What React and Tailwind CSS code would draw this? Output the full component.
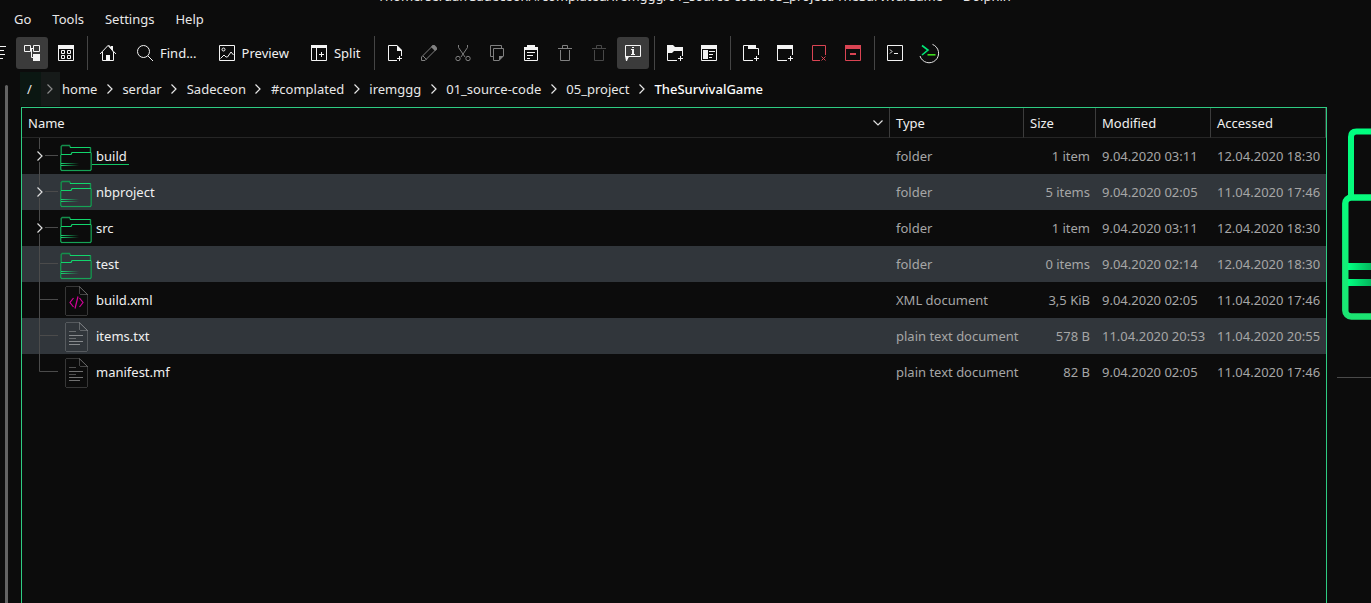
import React from "react";

const menus = ["Go", "Tools", "Settings", "Help"];

const crumbs = ["home", "serdar", "Sadeceon", "#complated", "iremggg", "01_source-code", "05_project", "TheSurvivalGame"];

const files = [
  { name: "build", kind: "folder", expandable: true, type: "folder", size: "1 item", modified: "9.04.2020 03:11", accessed: "12.04.2020 18:30", current: true },
  { name: "nbproject", kind: "folder", expandable: true, type: "folder", size: "5 items", modified: "9.04.2020 02:05", accessed: "11.04.2020 17:46" },
  { name: "src", kind: "folder", expandable: true, type: "folder", size: "1 item", modified: "9.04.2020 03:11", accessed: "12.04.2020 18:30" },
  { name: "test", kind: "folder", type: "folder", size: "0 items", modified: "9.04.2020 02:14", accessed: "12.04.2020 18:30" },
  { name: "build.xml", kind: "xml", type: "XML document", size: "3,5 KiB", modified: "9.04.2020 02:05", accessed: "11.04.2020 17:46" },
  { name: "items.txt", kind: "text", type: "plain text document", size: "578 B", modified: "11.04.2020 20:53", accessed: "11.04.2020 20:55" },
  { name: "manifest.mf", kind: "text", type: "plain text document", size: "82 B", modified: "9.04.2020 02:05", accessed: "11.04.2020 17:46" },
];

const line = { fill: "none", stroke: "currentColor" };

const glyphs = {
  compact: (
    <g fill="currentColor">
      <path d="M3 4h16v1H3zM3 8h14v1H3zM3 12h15v1H3zM3 16h13v1H3z" />
    </g>
  ),
  tree: (
    <g>
      <path {...line} d="M3.5 3.5h6v6h-6zM12.5 3.5h6v6h-6zM10 6.5h2M10.5 7v8.5h2" />
      <path fill="currentColor" d="M12 12h7v7h-7z" />
    </g>
  ),
  grid: (
    <g>
      <path {...line} d="M3.5 3.5h15v15h-15zM6.5 8.5h3v3h-3zM12.5 8.5h3v3h-3zM6.5 13.5h3v3h-3zM12.5 13.5h3v3h-3z" />
      <path fill="currentColor" d="M3 3h16v4H3z" />
    </g>
  ),
  home: (
    <g>
      <path {...line} d="M3 12l8-8.5 8 8.500M5.500 10v8.500h11V10" />
      <path fill="currentColor" d="M9 13h4v6H9zM11 3h1l2 2V4h2v6z" />
    </g>
  ),
  find: (
    <g {...line}>
      <circle cx="9.500" cy="9.500" r="6" />
      <path d="M14 14l5 5" />
    </g>
  ),
  preview: (
    <g {...line}>
      <path d="M3.500 3.500h15v15h-15zM4.500 16.500l3.500-3.500 2 2h1.500l3.500-5 2.500 3" />
      <circle cx="7.500" cy="7.500" r="1.500" />
    </g>
  ),
  split: (
    <g>
      <path {...line} d="M3.500 3.500h15v15h-15zM8.500 6v12M13.500 10v5M11 12.500h5" />
      <path fill="currentColor" d="M3 3h16v3H3z" />
    </g>
  ),
  newFile: (
    <g>
      <path {...line} d="M13 3.500H4.500v15H13M17.500 8v6M15.500 14v5M13 16.500h5" />
      <path fill="currentColor" d="M13 3l5 5v1h-5z" />
    </g>
  ),
  pencil: (
    <g>
      <path {...line} d="M3.500 18.500v-3.500L14.500 4l3.500 3.500L7 18.500zM5 14l3.500 3.500" />
      <path fill="currentColor" d="M13 5l1.500-2h2L19 5.500v2L17 9z" />
    </g>
  ),
  cut: (
    <g {...line}>
      <path d="M6.500 3v2.500L13 15M15.500 3v2.500L9 15" />
      <circle cx="6" cy="16.500" r="2.200" />
      <circle cx="16" cy="16.500" r="2.200" />
    </g>
  ),
  copy: (
    <g>
      <path {...line} d="M7 14.500H4.500v-11h11V6M13 18.500H7.500v-12h10V14" />
      <path fill="currentColor" d="M13 14h5l-5 5z" />
    </g>
  ),
  paste: (
    <g>
      <path {...line} d="M4.500 5.500h13v13h-13zM7 10.500h8M7 13.500h6M7 16.500h3" />
      <path fill="currentColor" d="M7 3h8v2h3v3H4V5h3z" />
    </g>
  ),
  trash: <path {...line} d="M4 6.500h14M8.500 6V3.500h5V6M6.500 8v10.500h9V8" />,
  info: (
    <g>
      <path {...line} d="M3.500 3.500h15v11H6.500l-2 3v-3h-1z" />
      <path fill="currentColor" d="M3 14h4l-2 5H4zM10 5h2v1h-2zM9 7h3v5h1v1H9v-1h1V8H9z" />
    </g>
  ),
  newFolder: (
    <g>
      <path {...line} d="M3.500 8v10.500H13M18.500 8v6M16.500 14v5M14 16.500h5" />
      <path fill="currentColor" d="M3 3h6l2 2h8v4h-9l-2 2H3z" />
    </g>
  ),
  places: (
    <g>
      <path {...line} d="M3.500 3.500h15v15h-15zM11 9.500h6M11 12.500h4M11 15.500h3" />
      <path fill="currentColor" d="M3 3h16v4H3zM5 8h5v9H5z" />
    </g>
  ),
  newTab: (
    <g>
      <path {...line} d="M9 3.500H3.500v15H13M16 6.500h2.500V13M16.500 14v5M14 16.500h5" />
      <path fill="currentColor" d="M8 3h8v4H8z" />
    </g>
  ),
  newWindow: (
    <g>
      <path {...line} d="M3.500 7v11.500H13M18.500 7v6M16.500 14v5M14 16.500h5" />
      <path fill="currentColor" d="M3 3h16v4H3z" />
    </g>
  ),
  closeTab: <path {...line} d="M12 18.500H4.500v-15h13V13M13.500 14.500l4 4M17.500 14.500l-4 4" />,
  closeWindow: (
    <g>
      <path {...line} d="M3.500 3.500h15v15h-15z" />
      <path fill="currentColor" d="M3 3h16v4H3zM8 11h6v2H8z" />
    </g>
  ),
  terminal: <path {...line} d="M3.500 3.500h15v15h-15zM6 7.500l2 2-2 2M10 11.500h4" />,
  shell: (
    <g fill="none">
      <path stroke="#e6e6e6" strokeWidth="1" d="M14.500 2.400A9.500 9.500 0 1 1 2 14" />
      <path stroke="#00e676" strokeWidth="1.600" d="M4 3.500l6 4.500-6 5" />
      <path stroke="#3fdc1e" strokeWidth="1.600" d="M9.500 12.800h8" />
    </g>
  ),
};

function Glyph({ name }) {
  return (
    <svg viewBox="0 0 22 22" className="size-[22px] shrink-0" aria-hidden="true">
      {glyphs[name]}
    </svg>
  );
}

function ToolButton({ icon, label, text, active, tone = "text-[#f4f4f4]" }) {
  return (
    <button
      type="button"
      aria-label={text ? undefined : label}
      className={`flex h-8 shrink-0 items-center gap-1 rounded-[3px] ${text ? "pr-[9px] pl-2" : "px-[5px]"} ${active ? "bg-[#3b3b3b]" : ""} ${tone}`}
    >
      <Glyph name={icon} />
      {text && <span className="text-[#f0f0f0]">{text}</span>}
    </button>
  );
}

function Divider() {
  return (
    <div className="flex h-[34px] w-1.5 shrink-0 pl-[3px]">
      <div className="w-px bg-[#454545]" />
    </div>
  );
}

function Chevron({ className = "w-[21px]" }) {
  return (
    <span className={`flex shrink-0 items-center justify-center ${className}`}>
      <svg viewBox="0 0 10 12" className="h-3 w-2.5" fill="none" stroke="currentColor" strokeWidth="1.200" aria-hidden="true">
        <path d="M2.500 1.500L7 6l-4.500 4.500" />
      </svg>
    </span>
  );
}

function TreeLines({ expandable, last }) {
  return (
    <svg viewBox="0 0 38 36" className="h-9 w-[38px] shrink-0" fill="none" aria-hidden="true">
      {expandable ? (
        <g>
          <path stroke="#4b4b4b" d="M17.500 0v11M17.500 24v12M23 17.500h13" />
          <path stroke="#e0e0e0" strokeWidth="1.200" d="M15.500 13.500L20 18l-4.500 4.500" />
        </g>
      ) : (
        <path stroke="#4b4b4b" d={last ? "M17.500 0v17.500H36" : "M17.500 0v36M17.500 17.500H36"} />
      )}
    </svg>
  );
}

function FolderIcon() {
  return (
    <svg viewBox="0 0 32 32" className="size-8 shrink-0" fill="none" aria-hidden="true">
      <defs>
        <linearGradient id="stripe" x1="0" x2="1" y1="0" y2="0">
          <stop offset="0" stopColor="#19d873" />
          <stop offset="1" stopColor="#19d873" stopOpacity="0" />
        </linearGradient>
      </defs>
      <path stroke="#14904c" strokeWidth="1.400" d="M1.200 14V6.500l1-1h7.300l1 2M30.500 7.500V12M.7 14.500v15l1 1M31.200 12.500v17l-1 1" />
      <path stroke="#12d56c" strokeWidth="1.200" d="M10 7.500h20.500M1 14.500h10l1-2h19" />
      <path stroke="#16a356" strokeWidth="1.200" d="M1 30.500h30" />
      <path fill="url(#stripe)" d="M1 23h18v1H1zM1 25h18v1H1z" />
    </svg>
  );
}

function DocumentIcon({ xml }) {
  return (
    <svg viewBox="0 0 32 32" className="size-8 shrink-0" fill="none" aria-hidden="true">
      <path stroke="#ffffff" strokeOpacity="0.180" d="M19 2.500H6.500l-1 1v27l1 1h20l1-1V10.500z" />
      <path stroke="#ffffff" strokeOpacity="0.240" d="M19.500 2.500v7l1 1h7z" />
      {xml ? (
        <path stroke="#d6009a" strokeWidth="1.200" d="M13.500 14l-3.500 4.500 3.500 4.500M19.500 14l3.500 4.500-3.500 4.500M18 12.500l-3 12" />
      ) : (
        <g stroke="#ffffff">
          <path strokeOpacity="0.280" d="M9 11.500h7M9 18.500h7" />
          <path strokeOpacity="0.420" d="M9 15.500h14M9 21.500h14M9 24.500h11" />
        </g>
      )}
    </svg>
  );
}

function PreviewFolder() {
  return (
    <svg viewBox="0 0 256 192" className="h-48 w-64 shrink-0" fill="none" aria-hidden="true">
      <defs>
        <linearGradient id="edge" x1="0" x2="0" y1="0" y2="192" gradientUnits="userSpaceOnUse">
          <stop offset="0" stopColor="#00ff80" />
          <stop offset="0.400" stopColor="#08fb7c" />
          <stop offset="1" stopColor="#1ce472" />
        </linearGradient>
        <linearGradient id="bands" x1="7" x2="110" y1="0" y2="0" gradientUnits="userSpaceOnUse">
          <stop offset="0" stopColor="#00ff80" />
          <stop offset="1" stopColor="#0a8a48" stopOpacity="0" />
        </linearGradient>
      </defs>
      <path stroke="url(#edge)" strokeWidth="6" d="M9 70V9q0-5.500 5.500-5.500h60l10 14h155v52" />
      <rect x="3.300" y="69.500" width="248" height="119" rx="6" stroke="url(#edge)" strokeWidth="6.400" />
      <path fill="url(#bands)" d="M6 135h110v7H6zM6 151h110v7H6z" />
    </svg>
  );
}

function HeaderCell({ children }) {
  return (
    <th scope="col" className="h-[30px] border-r border-b border-r-[#3c3c3c] border-b-[#262626] px-1.5 text-left font-normal text-[#f0f0f0]">
      {children}
    </th>
  );
}

export default function App() {
  return (
    <div className="flex h-screen flex-col overflow-hidden bg-[#0c0c0c] font-['Noto_Sans',sans-serif] text-[13px] leading-[18px] text-[#e8e8e8]">
      <header className="flex h-[5px] shrink-0 items-end justify-center overflow-hidden pl-5">
        <h1 className="whitespace-nowrap">
          /home/serdar/Sadeceon/#complated/iremggg/01_source-code/05_project/TheSurvivalGame — Dolphin
        </h1>
      </header>

      <nav aria-label="Menu" className="flex h-[29px] shrink-0 items-center pb-px pl-1">
        {menus.map((m) => (
          <button key={m} type="button" className="pr-[11px] pl-2.5 last:pr-2.5">
            {m}
          </button>
        ))}
      </nav>

      <div role="toolbar" aria-label="Main toolbar" className="-ml-[18px] flex h-[38px] shrink-0 items-center gap-0.5">
        <ToolButton icon="compact" label="Compact" />
        <ToolButton icon="tree" label="Details" active />
        <ToolButton icon="grid" label="Icons" />
        <Divider />
        <ToolButton icon="home" label="Home" />
        <ToolButton icon="find" text="Find..." />
        <ToolButton icon="preview" text="Preview" />
        <ToolButton icon="split" text="Split" />
        <Divider />
        <ToolButton icon="newFile" label="Create new file" />
        <ToolButton icon="pencil" label="Rename" tone="text-[#808080]" />
        <ToolButton icon="cut" label="Cut" tone="text-[#808080]" />
        <ToolButton icon="copy" label="Copy" tone="text-[#808080]" />
        <ToolButton icon="paste" label="Paste" />
        <ToolButton icon="trash" label="Move to trash" tone="text-[#808080]" />
        <ToolButton icon="trash" label="Delete" tone="text-[#484848]" />
        <ToolButton icon="info" label="Information" active />
        <Divider />
        <ToolButton icon="newFolder" label="Create folder" />
        <ToolButton icon="places" label="Places" />
        <Divider />
        <ToolButton icon="newTab" label="New tab" />
        <ToolButton icon="newWindow" label="New window" />
        <ToolButton icon="closeTab" label="Close tab" tone="text-[#da4453]" />
        <ToolButton icon="closeWindow" label="Quit" tone="text-[#da4453]" />
        <Divider />
        <ToolButton icon="terminal" label="Terminal" />
        <ToolButton icon="shell" label="Open terminal here" />
      </div>

      <div className="flex min-h-0 flex-1">
        <aside className="flex w-5 shrink-0 pt-[13px] pl-[5px]">
          <div className="w-[3px] rounded-t bg-[#636363]" />
        </aside>

        <main className="flex min-w-0 flex-1 flex-col">
          <nav aria-label="Location" className="flex h-[35px] shrink-0 pb-px">
            <a href="#root" className="flex w-[21px] items-center justify-center bg-[#0b1712] pr-0.5">/</a>
            <Chevron className="w-[19px] bg-[#161a19] pr-0.5 text-[#8a8a8a]" />
            {crumbs.map((c, i) => (
              <React.Fragment key={c}>
                {i > 0 && <Chevron />}
                <a href={`#${i}`} className={`flex items-center px-0.5 ${i === crumbs.length - 1 ? "font-medium text-[#fcfcfc]" : ""}`}>
                  {c}
                </a>
              </React.Fragment>
            ))}
          </nav>

          <section aria-label="Files" className="ml-px min-h-0 flex-1 border border-b-0 border-[#2ecc83]">
            <table className="w-full table-fixed border-separate border-spacing-0">
              <colgroup>
                <col />
                <col className="w-[134px]" />
                <col className="w-[72px]" />
                <col className="w-[115px]" />
                <col className="w-[115px]" />
              </colgroup>
              <thead>
                <tr>
                  <HeaderCell>
                    <span className="flex items-center justify-between">
                      Name
                      <svg viewBox="0 0 10 8" className="h-2 w-2.5" fill="none" stroke="#e0e0e0" strokeWidth="1.200" aria-hidden="true">
                        <path d="M.5 1.500L5 6l4.500-4.500" />
                      </svg>
                    </span>
                  </HeaderCell>
                  <HeaderCell>Type</HeaderCell>
                  <HeaderCell>Size</HeaderCell>
                  <HeaderCell>Modified</HeaderCell>
                  <HeaderCell>Accessed</HeaderCell>
                </tr>
              </thead>
              <tbody className="whitespace-nowrap text-[#a6a6a6]">
                {files.map((f, i) => (
                  <tr key={f.name} className="h-9 even:bg-[#31363b]">
                    <td className="p-0">
                      <div className="flex h-9 items-center">
                        <TreeLines expandable={f.expandable} last={i === files.length - 1} />
                        {f.kind === "folder" ? <FolderIcon /> : <DocumentIcon xml={f.kind === "xml"} />}
                        <span className={`h-[18px] pr-0.5 pl-1 text-[#f0f0f0] ${f.current ? "border-b border-[#12c765]" : ""}`}>{f.name}</span>
                      </div>
                    </td>
                    <td className="px-1.5 py-0">{f.type}</td>
                    <td className="px-1.5 py-0 text-right">{f.size}</td>
                    <td className="px-1.5 py-0">{f.modified}</td>
                    <td className="px-1.5 py-0">{f.accessed}</td>
                  </tr>
                ))}
              </tbody>
            </table>
          </section>
        </main>

        <aside aria-label="Information" className="w-11 shrink-0 overflow-hidden pt-14">
          <div className="ml-[15px]">
            <PreviewFolder />
          </div>
          <hr className="mt-[57px] ml-2.5 border-[#4a4a4a]" />
        </aside>
      </div>
    </div>
  );
}
